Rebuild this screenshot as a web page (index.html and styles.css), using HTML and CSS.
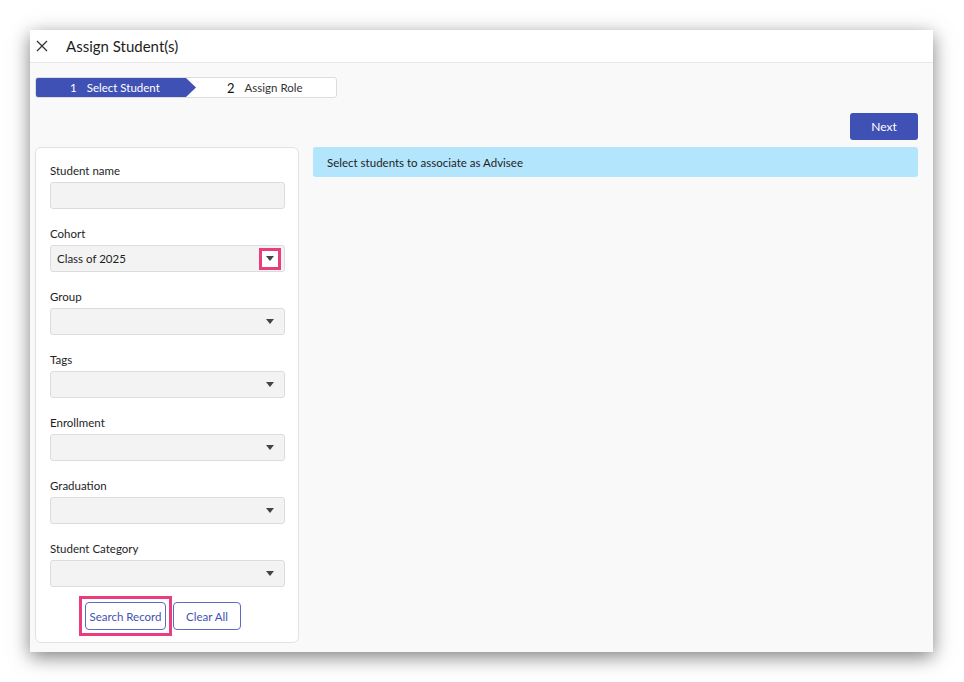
FILE: index.html
```html
<!DOCTYPE html>
<html lang="en">
<head>
    <meta charset="UTF-8">
    <title>Assign Student(s)</title>
    <link rel="stylesheet" href="styles.css">
</head>
<body>
    <!-- Dialog -->
    <div class="dialog">
        <div class="dialog-header">
            <svg class="close-icon" width="12" height="12" viewBox="0 0 12 12">
                <path d="M1 1L11 11M11 1L1 11" stroke="#333" stroke-width="1.3" fill="none"/>
            </svg>
            <span class="dialog-title">Assign Student(s)</span>
        </div>

        <div class="dialog-body">
            <!-- Stepper -->
            <div class="stepper">
                <div class="step step-active"><span class="step-num">1</span>Select Student</div>
                <div class="step step-next"><span class="step-num">2</span>Assign Role</div>
            </div>

            <div class="actions">
                <button class="btn-primary">Next</button>
            </div>

            <div class="content">
                <!-- Filter panel -->
                <div class="filter-panel">
                    <label>Student name</label>
                    <div class="field"></div>

                    <label>Cohort</label>
                    <div class="field select">
                        <span>Class of 2025</span>
                        <span class="arrow-wrap highlight"><span class="arrow"></span></span>
                    </div>

                    <label>Group</label>
                    <div class="field select"><span></span><span class="arrow-wrap"><span class="arrow"></span></span></div>

                    <label>Tags</label>
                    <div class="field select"><span></span><span class="arrow-wrap"><span class="arrow"></span></span></div>

                    <label>Enrollment</label>
                    <div class="field select"><span></span><span class="arrow-wrap"><span class="arrow"></span></span></div>

                    <label>Graduation</label>
                    <div class="field select"><span></span><span class="arrow-wrap"><span class="arrow"></span></span></div>

                    <label>Student Category</label>
                    <div class="field select"><span></span><span class="arrow-wrap"><span class="arrow"></span></span></div>

                    <div class="filter-buttons">
                        <span class="highlight-box"><button class="btn-outline btn-search">Search Record</button></span>
                        <button class="btn-outline btn-clear">Clear All</button>
                    </div>
                </div>

                <!-- Results -->
                <div class="results">
                    <div class="info-bar">Select students to associate as Advisee</div>
                </div>
            </div>
        </div>
    </div>
</body>
</html>
```

FILE: styles.css
```css
/* General styles */
body {
    font-family: Lato, "Open Sans", sans-serif;
    margin: 0;
    padding: 30px;
    background-color: #fff;
    color: #1e1e1e;
}

/* Dialog box */
.dialog {
    width: 903px;
    height: 622px;
    background-color: #f9f9f9;
    box-shadow: 0 5px 18px rgba(0, 0, 0, 0.5);
    display: flex;
    flex-direction: column;
}

.dialog-header {
    height: 32px;
    flex-shrink: 0;
    background-color: #fff;
    border-bottom: 1px solid #e8e8e8;
    display: flex;
    align-items: center;
    padding-left: 6px;
}

.close-icon {
    margin-right: 18px;
}

.dialog-title {
    font-size: 15px;
    color: #1e1e1e;
}

.dialog-body {
    padding: 14px 15px 9px 5px;
    flex: 1;
    display: flex;
    flex-direction: column;
    min-height: 0;
}

/* Stepper */
.stepper {
    display: flex;
    width: 300px;
    height: 19px;
    flex-shrink: 0;
    border: 1px solid #ddd;
    border-radius: 3px;
    background-color: #fff;
    overflow: hidden;
    font-size: 11.5px;
}

.step {
    display: flex;
    align-items: center;
    height: 100%;
}

.step-num {
    margin-right: 10px;
}

.step-active {
    width: 160px;
    background-color: #3f51b5;
    color: #fff;
    padding-left: 34px;
    box-sizing: border-box;
    clip-path: polygon(0 0, 150px 0, 160px 50%, 150px 100%, 0 100%);
}

.step-next {
    padding-left: 31px;
    color: #333;
}

.step-next .step-num {
    font-size: 13px;
    color: #111;
}

.actions {
    display: flex;
    justify-content: flex-end;
    margin-top: 15px;
    flex-shrink: 0;
}

.btn-primary {
    background-color: #3f51b5;
    color: #fff;
    border: none;
    border-radius: 3px;
    width: 68px;
    height: 27px;
    font-family: inherit;
    font-size: 12px;
    cursor: pointer;
}

.content {
    display: flex;
    margin-top: 7px;
    flex: 1;
    min-height: 0;
}

/* Filter panel */
.filter-panel {
    width: 235px;
    background-color: #fff;
    border: 1px solid #e2e2e2;
    border-radius: 6px;
    padding: 15px 13px 0 14px;
}

.filter-panel label {
    display: block;
    font-size: 11.5px;
    line-height: 15px;
    color: #1e1e1e;
    margin-bottom: 4px;
}

.field {
    height: 25px;
    background-color: #f3f3f3;
    border: 1px solid #dcdcdc;
    border-radius: 3px;
    margin-bottom: 17px;
    display: flex;
    align-items: center;
    justify-content: space-between;
    font-size: 11.5px;
    padding-left: 6px;
}

.arrow-wrap {
    width: 16px;
    height: 16px;
    display: flex;
    align-items: center;
    justify-content: center;
    margin-right: 6px;
}

.arrow {
    width: 0;
    height: 0;
    border-left: 4px solid transparent;
    border-right: 4px solid transparent;
    border-top: 5px solid #444;
}

.arrow-wrap.highlight {
    outline: 3px solid #e83e7d;
    background-color: #fff;
}

.filter-buttons {
    display: flex;
    align-items: flex-start;
    gap: 7px;
    margin-top: -2px;
    padding-left: 35px;
}

/* Pink box drawn round the search button */
.highlight-box {
    display: flex;
    border: 3px solid #e83e7d;
    padding: 3px;
    margin: -6px;
}

.btn-outline {
    background-color: #fff;
    color: #3f51b5;
    border: 1px solid #5c6bc0;
    border-radius: 4px;
    height: 28px;
    padding: 0;
    font-family: inherit;
    font-size: 11.5px;
    cursor: pointer;
}

.btn-search {
    width: 81px;
}

.btn-clear {
    width: 68px;
}

/* Results area */
.results {
    flex: 1;
    margin-left: 14px;
}

.info-bar {
    background-color: #b3e5fc;
    border-radius: 3px;
    height: 30px;
    display: flex;
    align-items: center;
    padding-left: 14px;
    font-size: 11.5px;
    color: #1e1e1e;
}
```
